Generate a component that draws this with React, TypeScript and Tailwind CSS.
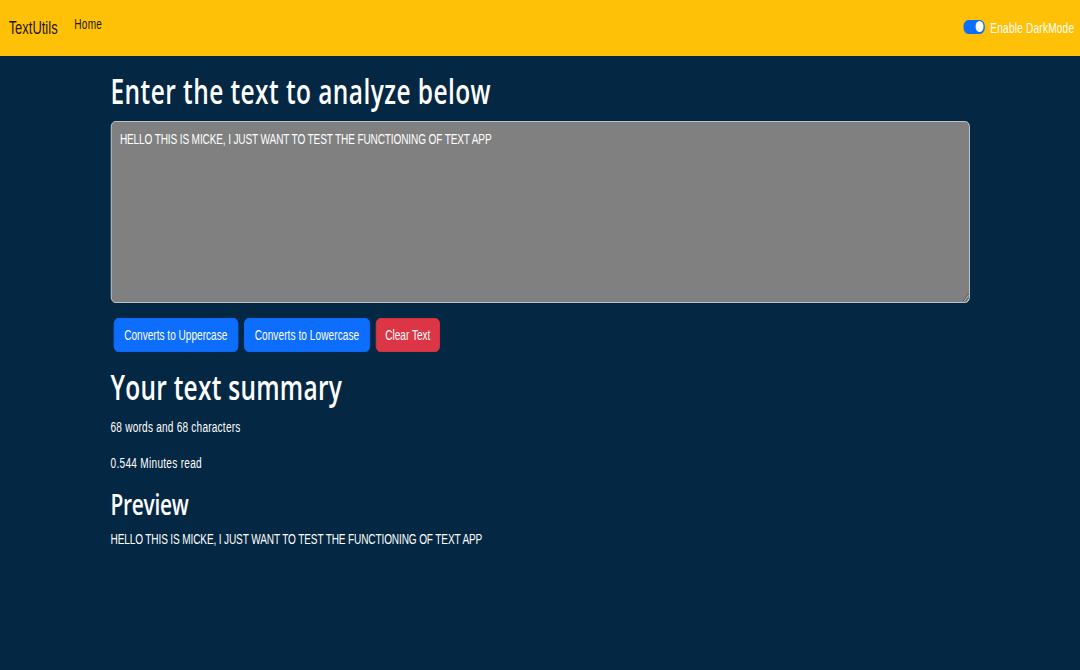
import React from 'react';

const sample = 'HELLO THIS IS MICKE, I JUST WANT TO TEST THE FUNCTIONING OF TEXT APP';

export default function App() {
    return (
        <div className="h-[670px] w-[1080px] overflow-hidden bg-[#042743] font-['Liberation_Sans',Arial,sans-serif]">
            {/* the whole page is squeezed horizontally, like the reference capture */}
            <div className="h-[670px] w-[1500px] origin-top-left scale-x-[0.72]">
                <nav className="flex h-[56px] bg-[#ffc107] pl-3 pr-2">
                    <a className="mt-[15px] text-[18px] leading-[27px] text-black/90">TextUtils</a>
                    <a className="ml-[23px] mt-[14px] text-[14px] leading-[20px] tracking-[0.4px] text-black/90">Home</a>
                    <div className="ml-auto flex items-start">
                        <span className="mt-[19.5px] flex h-[14.5px] w-[30px] items-center justify-end rounded-full bg-[#0d6efd] px-[2px]">
                            <span className="h-[11px] w-[11px] rounded-full bg-white" />
                        </span>
                        <span className="ml-[7px] mt-[17.5px] text-[14px] leading-[20px] tracking-[0.3px] text-white">
                            Enable DarkMode
                        </span>
                    </div>
                </nav>

                <main className="mx-auto w-[1193px] text-white">
                    <h1 className="mt-[15px] font-['Open_Sans',sans-serif] text-[34px] font-semibold leading-[40px] tracking-[0.6px]">
                        Enter the text to analyze below
                    </h1>
                    <textarea
                        readOnly
                        defaultValue={sample}
                        className="mt-[10px] block h-[182px] w-full resize-y rounded-md border border-[#ced4da] bg-[#808080] px-3 pt-[5px] text-[14px] leading-[24px] tracking-[-0.2px] text-white outline-none"
                    />
                    <div className="mt-[15px] flex">
                        <button className="mx-1 rounded-md border border-[#0d6efd] bg-[#0d6efd] px-[14px] py-[6px] text-[14px] leading-[20px] text-white">
                            Converts to Uppercase
                        </button>
                        <button className="mx-1 rounded-md border border-[#0d6efd] bg-[#0d6efd] px-[14px] py-[6px] text-[14px] leading-[20px] tracking-[0.1px] text-white">
                            Converts to Lowercase
                        </button>
                        <button className="mx-1 rounded-md border border-[#dc3545] bg-[#dc3545] px-3 py-[6px] text-[14px] leading-[20px] text-white">
                            Clear Text
                        </button>
                    </div>

                    <h1 className="mt-[15px] font-['Open_Sans',sans-serif] text-[34px] font-semibold leading-[40px] tracking-[0.35px]">
                        Your text summary
                    </h1>
                    <p className="mt-[8px] text-[14px] leading-[24px] tracking-[0.3px]">68 words and 68 characters</p>
                    <p className="mt-[12px] text-[14px] leading-[24px] tracking-[0.4px]">0.544 Minutes read</p>
                    <h2 className="mt-[12px] font-['Open_Sans',sans-serif] text-[29px] font-semibold leading-[34px] tracking-[-0.4px]">
                        Preview
                    </h2>
                    <p className="mt-[6px] text-[14px] leading-[24px] tracking-[-0.2px]">{sample}</p>
                </main>
            </div>
        </div>
    );
}
